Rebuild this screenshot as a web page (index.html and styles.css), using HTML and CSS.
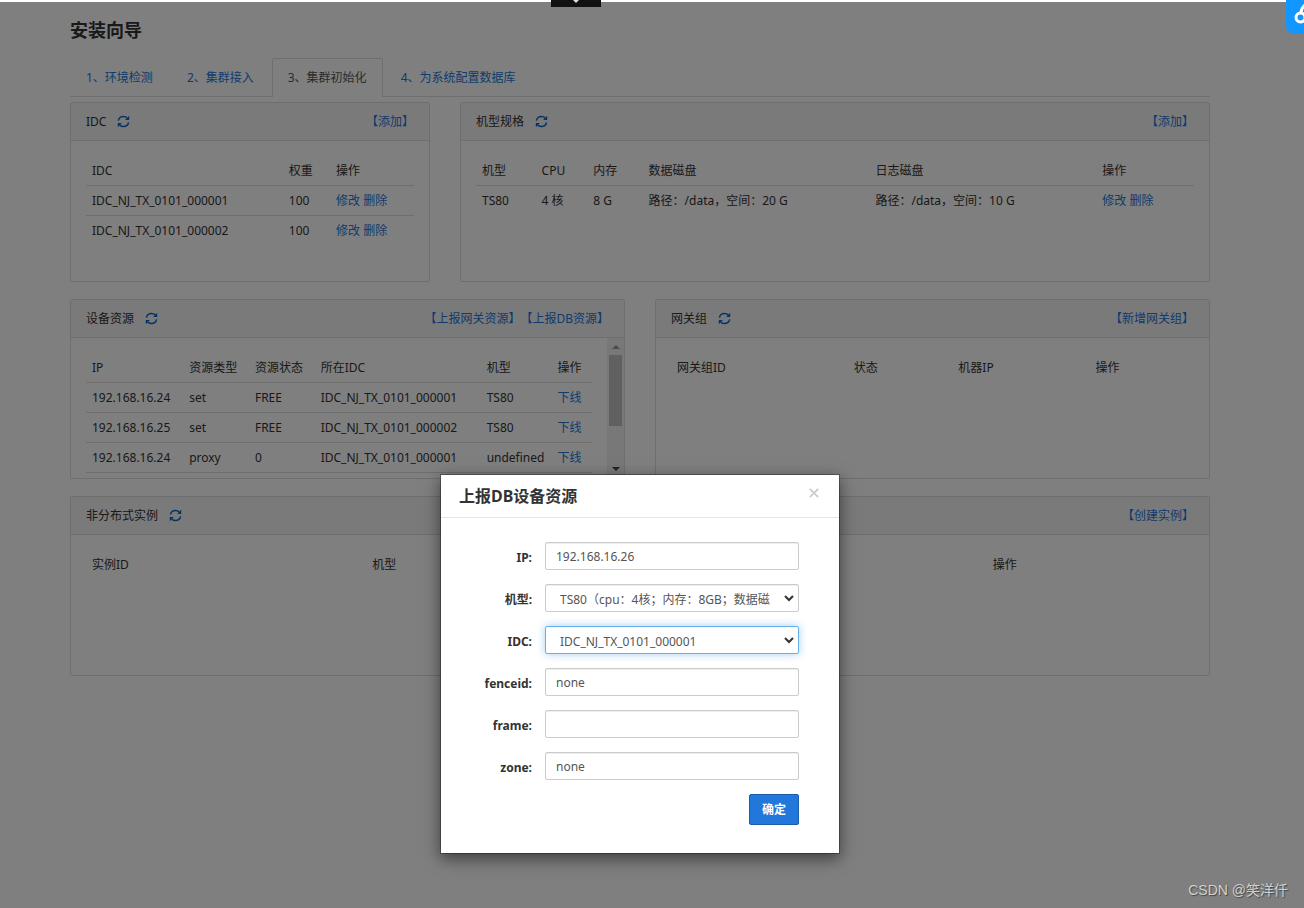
FILE: index.html
```
<!DOCTYPE html>
<html lang="zh-CN">
<head>
<meta charset="utf-8">
<title>安装向导</title>
<link rel="stylesheet" href="styles.css">
</head>
<body>
<svg class="sprite" aria-hidden="true">
  <symbol id="refresh" viewBox="0 0 13 13">
    <path d="M1.400 5.600C1.900 3 4 1.500 6.500 1.500c1.400 0 2.700.5 3.700 1.400M11.600 7.400c-.5 2.600-2.600 4.100-5.100 4.100-1.400 0-2.700-.5-3.700-1.400" fill="none" stroke="currentColor" stroke-width="1.500"/>
    <path d="M12.200.8v4.100H8.100zM.8 12.200V8.100h4.100z" fill="currentColor"/>
  </symbol>
</svg>
<main class="page">
  <h1 class="page-title">安装向导</h1>
  <nav class="tabs">
    <a class="tab" href="#env">1、环境检测</a>
    <a class="tab" href="#join">2、集群接入</a>
    <a class="tab tab-active" href="#init">3、集群初始化</a>
    <a class="tab" href="#db">4、为系统配置数据库</a>
  </nav>
  <div class="panels">
    <section class="panel span-4">
      <header class="panel-head"><h2>IDC</h2><button class="refresh" aria-label="刷新"><svg><use href="#refresh"/></svg></button><div class="actions"><a href="#add">【添加】</a></div></header>
      <div class="panel-body">
        <table class="grid">
          <colgroup><col class="idc-name"><col class="idc-weight"><col></colgroup>
          <thead><tr><th>IDC</th><th>权重</th><th>操作</th></tr></thead>
          <tbody>
            <tr><td>IDC_NJ_TX_0101_000001</td><td>100</td><td><a href="#edit">修改</a> <a href="#del">删除</a></td></tr>
            <tr><td>IDC_NJ_TX_0101_000002</td><td>100</td><td><a href="#edit">修改</a> <a href="#del">删除</a></td></tr>
          </tbody>
        </table>
      </div>
    </section>
    <section class="panel span-8">
      <header class="panel-head"><h2>机型规格</h2><button class="refresh" aria-label="刷新"><svg><use href="#refresh"/></svg></button><div class="actions"><a href="#add">【添加】</a></div></header>
      <div class="panel-body">
        <table class="grid">
          <colgroup><col class="spec-model"><col class="spec-cpu"><col class="spec-mem"><col class="spec-disk"><col class="spec-disk"><col></colgroup>
          <thead><tr><th>机型</th><th>CPU</th><th>内存</th><th>数据磁盘</th><th>日志磁盘</th><th>操作</th></tr></thead>
          <tbody><tr><td>TS80</td><td>4 核</td><td>8 G</td><td>路径：/data，空间：20 G</td><td>路径：/data，空间：10 G</td><td><a href="#edit">修改</a> <a href="#del">删除</a></td></tr></tbody>
        </table>
      </div>
    </section>
    <section class="panel span-6">
      <header class="panel-head"><h2>设备资源</h2><button class="refresh" aria-label="刷新"><svg><use href="#refresh"/></svg></button><div class="actions"><a href="#gateway">【上报网关资源】</a><a href="#dbres">【上报DB资源】</a></div></header>
      <div class="scroll-area">
        <div class="panel-body">
          <table class="grid">
            <colgroup><col class="dev-ip"><col class="dev-state"><col class="dev-state"><col class="dev-idc"><col class="dev-model"><col></colgroup>
            <thead><tr><th>IP</th><th>资源类型</th><th>资源状态</th><th>所在IDC</th><th>机型</th><th>操作</th></tr></thead>
            <tbody>
              <tr><td>192.168.16.24</td><td>set</td><td>FREE</td><td>IDC_NJ_TX_0101_000001</td><td>TS80</td><td><a href="#off">下线</a></td></tr>
              <tr><td>192.168.16.25</td><td>set</td><td>FREE</td><td>IDC_NJ_TX_0101_000002</td><td>TS80</td><td><a href="#off">下线</a></td></tr>
              <tr class="ruled"><td>192.168.16.24</td><td>proxy</td><td>0</td><td>IDC_NJ_TX_0101_000001</td><td>undefined</td><td><a href="#off">下线</a></td></tr>
            </tbody>
          </table>
        </div>
        <div class="scrollbar" aria-hidden="true"><i class="arrow-up"></i><i class="thumb"></i><i class="arrow-down"></i></div>
      </div>
    </section>
    <section class="panel span-6">
      <header class="panel-head"><h2>网关组</h2><button class="refresh" aria-label="刷新"><svg><use href="#refresh"/></svg></button><div class="actions"><a href="#newgroup">【新增网关组】</a></div></header>
      <div class="panel-body">
        <table class="grid">
          <colgroup><col class="gw-id"><col class="gw-state"><col class="gw-ip"><col></colgroup>
          <thead><tr><th>网关组ID</th><th>状态</th><th>机器IP</th><th>操作</th></tr></thead>
        </table>
      </div>
    </section>
    <section class="panel span-12">
      <header class="panel-head"><h2>非分布式实例</h2><button class="refresh" aria-label="刷新"><svg><use href="#refresh"/></svg></button><div class="actions"><a href="#create">【创建实例】</a></div></header>
      <div class="panel-body">
        <table class="grid">
          <colgroup><col class="inst-id"><col class="inst-model"><col></colgroup>
          <thead><tr><th>实例ID</th><th>机型</th><th>操作</th></tr></thead>
        </table>
      </div>
    </section>
  </div>
</main>

<div class="backdrop">
  <div class="modal" role="dialog" aria-labelledby="modal-title">
    <header class="modal-head">
      <h2 id="modal-title">上报DB设备资源</h2>
      <button class="close" aria-label="关闭"><svg viewBox="0 0 10 10"><path d="M.8.8l8.400 8.400M9.200.8L.8 9.200" fill="none" stroke="currentColor" stroke-width="1.800"/></svg></button>
    </header>
    <form class="form">
      <label for="ip">IP:</label><input id="ip" type="text" value="192.168.16.26">
      <label for="model">机型:</label><div class="select"><select id="model"><option>TS80（cpu：4核；内存：8GB；数据磁盘：20GB；日志磁盘：10GB）</option></select><svg viewBox="0 0 10 7"><path d="M1 1l4 4 4-4"/></svg></div>
      <label for="idc">IDC:</label><div class="select select-active"><select id="idc"><option>IDC_NJ_TX_0101_000001</option><option>IDC_NJ_TX_0101_000002</option></select><svg viewBox="0 0 10 7"><path d="M1 1l4 4 4-4"/></svg></div>
      <label for="fence">fenceid:</label><input id="fence" type="text" value="none">
      <label for="frame">frame:</label><input id="frame" type="text">
      <label for="zone">zone:</label><input id="zone" type="text" value="none">
      <button class="submit" type="button">确定</button>
    </form>
  </div>
</div>

<div class="pull-tab"><svg viewBox="0 0 8 4"><path d="M1 0h6L4 3z" fill="#ddd"/></svg></div>
<button class="float-tool" aria-label="工具"><svg viewBox="0 0 18 34"><circle cx="14.500" cy="17.500" r="4.500"/><path d="M15 12.500q.5-5 5-8.500"/></svg></button>
<div class="watermark">CSDN @笑洋仟</div>
</body>
</html>
```
FILE: styles.css
```
* { box-sizing: border-box; }
body {
  margin: 0;
  padding-right: 24px;
  min-height: 100vh;
  background: #fff;
  color: #333;
  font: 12px/18px "Noto Sans", "Noto Sans CJK SC", sans-serif;
  overflow-x: hidden;
}
a { color: #2277da; text-decoration: none; }
h1, h2 { margin: 0; }
button, input, select { font: inherit; color: inherit; }
.sprite { position: absolute; width: 0; height: 0; }

.page { max-width: 1140px; margin: 0 auto; padding-top: 18px; }
.page-title { font-size: 18px; line-height: 24px; font-weight: 700; }

.tabs { display: flex; gap: 2px; margin-top: 16px; border-bottom: 1px solid #ddd; }
.tab { padding: 10px 15px; border: 1px solid transparent; border-bottom: 0; margin-bottom: -1px; }
.tab-active { color: #555; background: #fff; border-color: #ddd; border-radius: 2px 2px 0 0; }

.panels { display: grid; grid-template-columns: repeat(12, 1fr); gap: 17px 30px; margin-top: 5px; }
.span-4 { grid-column: span 4; }
.span-6 { grid-column: span 6; }
.span-8 { grid-column: span 8; }
.span-12 { grid-column: span 12; }
.panel { min-width: 0; min-height: 180px; border: 1px solid #ddd; border-radius: 2px; }
.panel-head { display: flex; align-items: center; padding: 10px 15px 9px; background: #f5f5f5; border-bottom: 1px solid #ddd; }
.panel-head h2 { font-size: 12px; line-height: 18px; font-weight: 400; }
.refresh { display: flex; margin: 0 0 2px 11px; padding: 0; border: 0; background: none; color: #0b67d0; }
.refresh svg { width: 13px; height: 13px; }
.actions { display: flex; margin-left: auto; }
.panel-body { padding: 15px; flex: 1; min-width: 0; }

.grid { width: 100%; table-layout: fixed; border-collapse: separate; border-spacing: 0; }
.grid th, .grid td { height: 30px; padding: 6px 6px 5px; text-align: left; font-weight: 400; white-space: nowrap; }
.grid tbody td { border-top: 1px solid #ddd; }
.grid .ruled td { border-bottom: 1px solid #ddd; }
.grid thead th { height: 29px; }
.idc-name { width: 60%; }
.idc-weight { width: 14.400%; }
.spec-model { width: 8.300%; }
.spec-cpu { width: 7.200%; }
.spec-mem { width: 7.700%; }
.spec-disk { width: 31.600%; }
.dev-ip { width: 19.200%; }
.dev-state { width: 13%; }
.dev-idc { width: 32.800%; }
.dev-model { width: 14%; }
.gw-id { width: 33.800%; }
.gw-state { width: 20%; }
.gw-ip { width: 26.200%; }
.inst-id { width: 25.300%; }
.inst-model { width: 56%; }

.scroll-area { display: flex; height: 140px; overflow: hidden; }
.scrollbar { display: flex; flex-direction: column; align-items: center; width: 17px; padding: 7px 0; background: #f1f1f1; }
.arrow-up, .arrow-down { border: 4px solid transparent; }
.arrow-up { border-top: 0; border-bottom-color: #999; }
.thumb { width: 13px; height: 71px; margin: 6px 0 auto; background: #c1c1c1; }
.arrow-down { border-bottom: 0; border-top-color: #444; }

.backdrop { position: absolute; inset: 2px 0 0; min-height: 852px; padding: 472px 24px 0 0; background: rgba(0, 0, 0, .5); }
.modal { width: 400px; margin: 0 auto; background: #fff; background-clip: padding-box; border: 1px solid rgba(0, 0, 0, .3); box-shadow: 0 5px 15px rgba(0, 0, 0, .5); }
.modal-head { display: flex; align-items: center; justify-content: space-between; padding: 9px 20px 9px 18px; border-bottom: 1px solid #e5e5e5; }
.modal-head h2 { font-size: 16px; line-height: 24px; font-weight: 700; }
.close { display: flex; margin-bottom: 6px; padding: 0; border: 0; background: none; color: #ccc; }
.close svg { width: 10px; height: 10px; }
.form { display: grid; grid-template-columns: 91px 1fr; gap: 14px 13px; padding: 24px 40px 28px 0; }
.form label { align-self: center; padding-top: 4px; text-align: right; font-weight: 700; }
.form input, .form select { width: 100%; height: 28px; padding: 4px 10px; color: #555; background: #fff; border: 1px solid #ccc; border-radius: 2px; box-shadow: inset 0 1px 1px rgba(0, 0, 0, .075); outline: 0; }
.select { position: relative; }
.form select { display: block; padding: 6px 28px 4px 14px; appearance: none; }
.select svg { position: absolute; right: 5px; top: 11px; width: 10px; height: 7px; fill: none; stroke: #333; stroke-width: 2; pointer-events: none; }
.form .select-active select { border-color: #66afe9; box-shadow: 0 0 8px rgba(102, 175, 233, .6); }
.submit { grid-column: 2; justify-self: end; width: 50px; height: 31px; padding: 0; color: #fff; font-weight: 700; background: #2277da; border: 1px solid #1a5dab; border-radius: 2px; }

.pull-tab { position: absolute; top: 0; left: 551px; display: flex; justify-content: center; width: 50px; height: 7px; background: #111; }
.pull-tab svg { width: 8px; height: 4px; }
.float-tool { position: absolute; top: 0; right: 0; width: 18px; height: 34px; padding: 0; border: 0; border-radius: 0 0 0 8px; background: #1296ff; overflow: hidden; }
.float-tool svg { display: block; width: 18px; height: 34px; fill: none; stroke: #fff; stroke-width: 3; }
.watermark { position: absolute; right: 16px; bottom: 8px; color: #d0d0d0; font: 14px/20px "Liberation Sans", "Noto Sans CJK SC", sans-serif; text-shadow: 1px 1px 1px #444; }
```
